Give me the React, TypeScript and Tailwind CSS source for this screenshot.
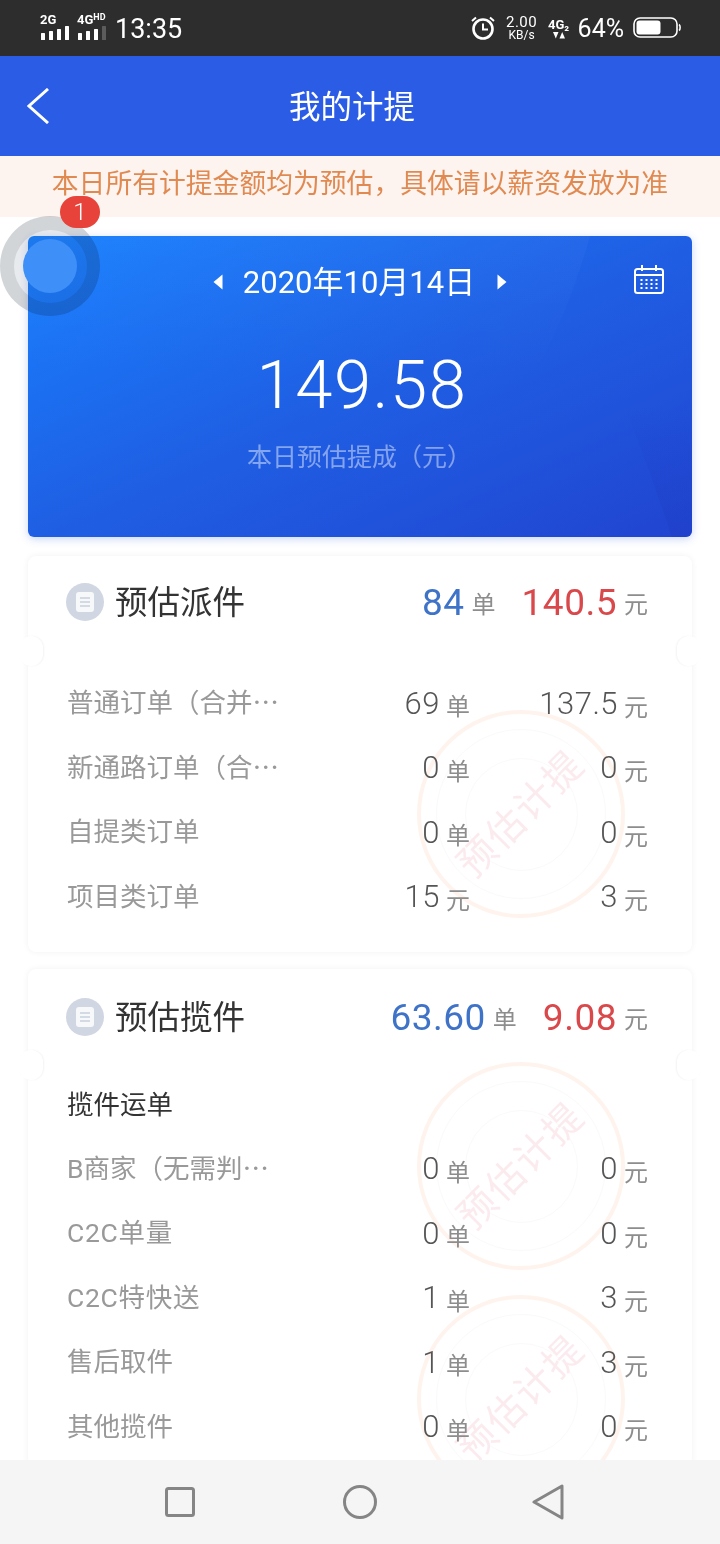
const font = "font-['Roboto','Noto_Sans_CJK_SC',sans-serif]";

type Row = { label: string; count: string; countUnit?: string; money: string };

const sendRows: Row[] = [
  { label: "普通订单（合并⋯", count: "69", money: "137.5" },
  { label: "新通路订单（合⋯", count: "0", money: "0" },
  { label: "自提类订单", count: "0", money: "0" },
  { label: "项目类订单", count: "15", countUnit: "元", money: "3" },
];

const pickRows: Row[] = [
  { label: "B商家（无需判⋯", count: "0", money: "0" },
  { label: "C2C单量", count: "0", money: "0" },
  { label: "C2C特快送", count: "1", money: "3" },
  { label: "售后取件", count: "1", money: "3" },
  { label: "其他揽件", count: "0", money: "0" },
];

const calendarDots = [14.5, 18.5, 22.5].flatMap((y) => [7, 12, 17, 22].map((x) => ({ x, y })));

function SignalBars({ dim }: { dim?: boolean }) {
  return (
    <svg width="30" height="14" viewBox="0 0 30 14" className="block">
      <rect x="1" y="7" width="4" height="7" rx="0.5" fill="#fff" />
      <rect x="9" y="5" width="4" height="9" rx="0.5" fill="#fff" />
      <rect x="17" y="3" width="4" height="11" rx="0.5" fill="#fff" />
      <rect x="25" y="0" width="4" height="14" rx="0.5" fill={dim ? "#5c5c5c" : "#fff"} />
    </svg>
  );
}

function StatusBar() {
  return (
    <div className="h-[56px] shrink-0 bg-[#2d2d2d] flex items-center pl-[40px] pr-[39px] text-white">
      <div className="flex flex-col w-[31px] mr-[6px] mt-[-3px]">
        <span className="text-[13px] leading-[13px] font-bold">2G</span>
        <SignalBars />
      </div>
      <div className="flex flex-col w-[32px] mr-[7px] mt-[-3px]">
        <span className="text-[13px] leading-[13px] font-bold whitespace-nowrap flex items-start">
          4G<span className="text-[9px] leading-[9px]">HD</span>
        </span>
        <SignalBars dim />
      </div>
      <span className="text-[27px] leading-none mt-[3px] -ml-[1px]">13:35</span>
      <div className="flex-1" />
      <svg width="26" height="26" viewBox="0 0 26 26" fill="none" stroke="#fff" className="mr-[9px]">
        <circle cx="13" cy="14" r="9.5" strokeWidth="2.6" />
        <path d="M13 8.5V14.5H18" strokeWidth="2" />
        <path d="M2 6 6 2.5M24 6 20 2.5" strokeWidth="2" />
      </svg>
      <div className="flex flex-col items-center leading-none w-[34px] mr-[9px]">
        <span className="text-[15px] leading-[13px] tracking-[0.5px]">2.00</span>
        <span className="text-[12px] leading-[12px]">KB/s</span>
      </div>
      <div className="flex flex-col items-center w-[22px] mr-[8px]">
        <span className="text-[13px] leading-[14px] font-bold whitespace-nowrap">4G₂</span>
        <svg width="12" height="7" viewBox="0 0 12 7" fill="#fff">
          <path d="M0 0H5.5L2.8 6.5Z" />
          <path d="M6.5 6.5H12L9.2 0Z" />
        </svg>
      </div>
      <span className="text-[25px] leading-none mr-[9px]">64%</span>
      <svg width="48" height="22" viewBox="0 0 48 22" fill="none">
        <rect x="1" y="1" width="43" height="19" rx="6" stroke="#fff" strokeWidth="1.6" />
        <rect x="3.5" y="3.5" width="24" height="14" rx="3" fill="#fff" />
        <path d="M46 7.5c1.5 1 1.5 5 0 6" stroke="#fff" strokeWidth="1.6" />
      </svg>
    </div>
  );
}

function Watermark({ top }: { top: string }) {
  return (
    <div className={`absolute left-[389px] ${top} w-[208px] h-[208px] rounded-full border-[4px] border-[#fef4ed] flex items-center justify-center pointer-events-none`}>
      <div className="w-[170px] h-[170px] rounded-full border border-[#fbfafa] flex items-center justify-center">
        <div className="w-[113px] h-[113px] rounded-full border border-[#fbfafa]" />
      </div>
      <span className="absolute whitespace-nowrap -rotate-45 text-[38px] leading-none text-[#fcebee] tracking-[2px]">
        预估计提
      </span>
    </div>
  );
}

function Notches({ top }: { top: string }) {
  return (
    <>
      <div className={`absolute -left-[9px] ${top} w-[24px] h-[30px] rounded-full bg-white shadow-[1px_0_2px_rgba(0,0,0,0.05)]`} />
      <div className={`absolute -right-[9px] ${top} w-[24px] h-[30px] rounded-full bg-white shadow-[-1px_0_2px_rgba(0,0,0,0.05)]`} />
    </>
  );
}

function DocIcon() {
  return (
    <div className="w-[38px] h-[38px] rounded-full bg-[#d0d6e2] flex items-center justify-center mr-[12px]">
      <svg width="20" height="22" viewBox="0 0 20 22">
        <rect x="1" y="1" width="18" height="20" rx="3" fill="#f7f8fa" />
        <path d="M5 7H15M5 11H15M5 15H15" stroke="#c9d0dc" strokeWidth="1.6" />
      </svg>
    </div>
  );
}

function CardHeader({ title, count, money, className }: { title: string; count: string; money: string; className: string }) {
  return (
    <div className={`flex items-center ${className}`}>
      <DocIcon />
      <span className="flex-1 text-[32.5px] leading-none text-[#333] mt-[2px] -ml-[1px]">{title}</span>
      <span className="text-[37px] leading-none text-[#3f73c8] tracking-[0.5px]">{count}</span>
      <span className="text-[24px] leading-none text-[#8d8d8d] ml-[7px] mt-[6px]">单</span>
      <span className="text-[37px] leading-none text-[#d9484b] ml-[26px] tracking-[0.5px]">{money}</span>
      <span className="text-[24px] leading-none text-[#8d8d8d] ml-[7px] mt-[6px]">元</span>
    </div>
  );
}

function DataRow({ row }: { row: Row }) {
  return (
    <div className="h-[64.5px] flex items-center">
      <span className={`flex-1 text-[26.5px] leading-none text-[#999] whitespace-nowrap -ml-[1px] ${row.label.startsWith("C2C") ? "tracking-[0.7px]" : ""}`}>
        {row.label}
      </span>
      <div className="flex items-center">
        <span className="text-[31px] leading-none font-light text-[#555] tracking-[0.5px]">{row.count}</span>
        <span className="text-[24px] leading-none text-[#8d8d8d] ml-[6px] mt-[8px]">{row.countUnit ?? "单"}</span>
      </div>
      <div className="w-[178px] flex items-center justify-end">
        <span className="text-[31px] leading-none font-light text-[#555] tracking-[0.5px]">{row.money}</span>
        <span className="text-[24px] leading-none text-[#8d8d8d] ml-[6px] mt-[9px]">元</span>
      </div>
    </div>
  );
}

function HeroCard() {
  return (
    <div className="relative mx-[28px] h-[301px] rounded-[6px] overflow-hidden bg-gradient-to-br from-[#1780ff] via-[#1f5fe4] to-[#2144d0] shadow-[0_2px_8px_rgba(40,90,220,0.25)] flex flex-col items-center text-white">
      <svg className="absolute inset-0" width="664" height="301" viewBox="0 0 664 301" fill="none">
        <defs>
          <linearGradient id="heroFade" x1="0" y1="0" x2="0" y2="1">
            <stop offset="0" stopColor="#fff" stopOpacity="0.03" />
            <stop offset="1" stopColor="#fff" stopOpacity="0" />
          </linearGradient>
          <linearGradient id="heroWedge" x1="0" y1="0" x2="0" y2="1">
            <stop offset="0" stopColor="#1e3cc4" stopOpacity="0" />
            <stop offset="1" stopColor="#1e3cc4" stopOpacity="0.4" />
          </linearGradient>
        </defs>
        <path d="M0 0H562C548 50 530 95 505 140H0Z" fill="url(#heroFade)" />
        <path d="M596 170C615 215 630 260 644 301H664V170Z" fill="url(#heroWedge)" />
      </svg>
      <div className="relative flex items-center h-[32px] mt-[30px]">
        <svg width="10" height="16" viewBox="0 0 10 16" fill="#fff" className="mr-[20px]">
          <path d="M9.5 0.5V15.5L0.5 8Z" />
        </svg>
        <span className="text-[31px] leading-none whitespace-nowrap">2020年10月14日</span>
        <svg width="10" height="16" viewBox="0 0 10 16" fill="#fff" className="ml-[22px]">
          <path d="M0.5 0.5V15.5L9.5 8Z" />
        </svg>
      </div>
      <svg className="absolute left-[606px] top-[29px]" width="30" height="29" viewBox="0 0 30 29" fill="none" stroke="#fff" strokeWidth="2">
        <rect x="1" y="4" width="28" height="24" rx="2.5" />
        <path d="M1 10H29M8 0V6M22 0V6" />
        {calendarDots.map((d) => (
          <rect key={`${d.x}-${d.y}`} x={d.x - 0.5} y={d.y - 0.5} width="2" height="2" fill="#fff" stroke="none" />
        ))}
      </svg>
      <span className="relative text-[67px] leading-none font-light mt-[54px] ml-[4px] tracking-[1.5px]">149.58</span>
      <span className="relative text-[25px] leading-none text-white/45 mt-[26px] -ml-[1px] whitespace-nowrap">本日预估提成（元）</span>
    </div>
  );
}

function FloatBall() {
  return (
    <>
      <div className="absolute left-0 top-[216px] w-[100px] h-[100px] rounded-full bg-[#d2d5d8] mix-blend-multiply flex items-center justify-center">
        <div className="w-[73px] h-[73px] rounded-full bg-[#e8ebee]" />
      </div>
      <div className="absolute left-[23px] top-[239px] w-[54px] h-[54px] rounded-full bg-[#3f8ff8]" />
      <div className="absolute left-[60px] top-[196px] w-[40px] h-[32px] rounded-full bg-[#e8433a] text-white text-[24px] font-light leading-[32px] text-center">
        1
      </div>
    </>
  );
}

export default function App() {
  return (
    <div className={`relative w-[720px] h-[1544px] overflow-hidden bg-white flex flex-col ${font}`}>
      <StatusBar />

      <div className="h-[100px] shrink-0 bg-[#2b5ce6] relative flex items-center justify-center pr-[16px] text-white">
        <svg className="absolute left-[27px] top-[32px]" width="22" height="36" viewBox="0 0 22 36" fill="none" stroke="#fff" strokeWidth="3">
          <path d="M21 1 2 18 21 35" />
        </svg>
        <span className="text-[31.5px] leading-none mt-[3px]">我的计提</span>
      </div>

      <div className="h-[61px] shrink-0 bg-[#fdf3ef] flex items-center justify-center text-[26.8px] leading-none text-[#e08a52] pb-[4px] whitespace-nowrap">
        本日所有计提金额均为预估，具体请以薪资发放为准
      </div>

      <div className="flex-1 min-h-0 overflow-hidden pt-[19px]">
        <HeroCard />

        <div className="relative mx-[28px] mt-[19px] h-[396px] rounded-[8px] bg-white shadow-[0_0_6px_rgba(0,0,0,0.06)] pl-[38px] pr-[44px]">
          <Notches top="top-[80px]" />
          <Watermark top="top-[154px]" />
          <CardHeader title="预估派件" count="84" money="140.5" className="h-[92px]" />
          <div className="relative mt-[23px] pl-[2px]">
            {sendRows.map((r) => (
              <DataRow key={r.label} row={r} />
            ))}
          </div>
        </div>

        <div className="relative mx-[28px] mt-[17px] h-[560px] rounded-[8px] bg-white shadow-[0_0_6px_rgba(0,0,0,0.06)] pl-[38px] pr-[44px]">
          <Notches top="top-[81px]" />
          <Watermark top="top-[93px]" />
          <Watermark top="top-[326px]" />
          <CardHeader title="预估揽件" count="63.60" money="9.08" className="h-[96px]" />
          <div className="relative mt-[7px] pl-[2px]">
            <div className="h-[64.5px] flex items-center text-[26.5px] leading-none text-[#333] pt-[2px] -ml-[1px]">揽件运单</div>
            {pickRows.map((r) => (
              <DataRow key={r.label} row={r} />
            ))}
          </div>
        </div>
      </div>

      <FloatBall />

      <div className="relative h-[84px] shrink-0 bg-[#f5f5f5] flex items-center pl-[165px]">
        <svg width="30" height="30" viewBox="0 0 30 30" fill="none" stroke="#858585" strokeWidth="3">
          <rect x="1.5" y="1.5" width="27" height="27" rx="2" />
        </svg>
        <svg width="34" height="34" viewBox="0 0 34 34" fill="none" stroke="#858585" strokeWidth="3" className="ml-[148px]">
          <circle cx="17" cy="17" r="15.5" />
        </svg>
        <svg width="32" height="36" viewBox="0 0 32 36" fill="none" stroke="#858585" strokeWidth="3" strokeLinejoin="round" className="ml-[155px]">
          <path d="M30 2V34L2 18Z" />
        </svg>
      </div>
    </div>
  );
}
